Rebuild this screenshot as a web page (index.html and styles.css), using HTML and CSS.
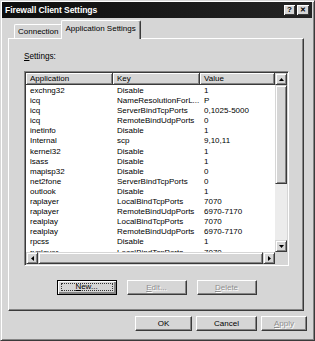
FILE: index.html
```html
<!DOCTYPE html>
<html>
<head>
<meta charset="utf-8">
<link rel="stylesheet" href="styles.css">
</head>
<body>
<div class="window">
  <div class="titlebar">
    <span class="title">Firewall Client Settings</span>
    <span class="tb-btns"><span class="tb-btn">?</span><span class="tb-btn close">&#x2715;</span></span>
  </div>
  <div class="tabs">
    <div class="tab">Connection</div>
    <div class="tab active">Application Settings</div>
  </div>
  <div class="panel">
    <div class="label"><u>S</u>ettings:</div>
    <div class="listbox">
      <div class="lv-main">
        <div class="lv-row lv-head">
          <span class="hcell">Application</span><span class="hcell">Key</span><span class="hcell last">Value</span>
        </div>
        <div class="lv-row"><span>exchng32</span><span>Disable</span><span>1</span></div>
        <div class="lv-row"><span>icq</span><span>NameResolutionForL...</span><span>P</span></div>
        <div class="lv-row"><span>icq</span><span>ServerBindTcpPorts</span><span>0,1025-5000</span></div>
        <div class="lv-row"><span>icq</span><span>RemoteBindUdpPorts</span><span>0</span></div>
        <div class="lv-row"><span>inetinfo</span><span>Disable</span><span>1</span></div>
        <div class="lv-row"><span>Internal</span><span>scp</span><span>9,10,11</span></div>
        <div class="lv-row"><span>kernel32</span><span>Disable</span><span>1</span></div>
        <div class="lv-row"><span>lsass</span><span>Disable</span><span>1</span></div>
        <div class="lv-row"><span>mapisp32</span><span>Disable</span><span>0</span></div>
        <div class="lv-row"><span>net2fone</span><span>ServerBindTcpPorts</span><span>0</span></div>
        <div class="lv-row"><span>outlook</span><span>Disable</span><span>1</span></div>
        <div class="lv-row"><span>raplayer</span><span>LocalBindTcpPorts</span><span>7070</span></div>
        <div class="lv-row"><span>raplayer</span><span>RemoteBindUdpPorts</span><span>6970-7170</span></div>
        <div class="lv-row"><span>realplay</span><span>LocalBindTcpPorts</span><span>7070</span></div>
        <div class="lv-row"><span>realplay</span><span>RemoteBindUdpPorts</span><span>6970-7170</span></div>
        <div class="lv-row"><span>rpcss</span><span>Disable</span><span>1</span></div>
        <div class="lv-row"><span>rvplayer</span><span>LocalBindTcpPorts</span><span>7070</span></div>
      </div>
      <div class="vscroll">
        <div class="sb-btn"><svg width="5" height="3" viewBox="0 0 5 3"><path d="M2.5 0 L5 3 L0 3 Z" fill="#000"/></svg></div>
        <div class="sb-thumb v"></div>
        <div class="sb-track"></div>
        <div class="sb-btn"><svg width="5" height="3" viewBox="0 0 5 3"><path d="M0 0 L5 0 L2.5 3 Z" fill="#000"/></svg></div>
      </div>
      <div class="hscroll">
        <div class="sb-btn"><svg width="3" height="5" viewBox="0 0 3 5"><path d="M3 0 L3 5 L0 2.5 Z" fill="#000"/></svg></div>
        <div class="sb-thumb h"></div>
        <div class="sb-btn"><svg width="3" height="5" viewBox="0 0 3 5"><path d="M0 0 L0 5 L3 2.5 Z" fill="#000"/></svg></div>
      </div>
      <div class="corner"></div>
    </div>
    <div class="btn-row">
      <div class="btn focus"><span class="focus-ring"><u>N</u>ew...</span></div>
      <div class="btn disabled"><u>E</u>dit...</div>
      <div class="btn disabled"><u>D</u>elete</div>
    </div>
  </div>
  <div class="dlg-buttons">
    <div class="btn dlg ok">OK</div>
    <div class="btn dlg cancel">Cancel</div>
    <div class="btn dlg apply disabled"><u>A</u>pply</div>
  </div>
</div>
</body>
</html>
```

FILE: styles.css
```css
* { box-sizing: border-box; }
html, body { margin: 0; padding: 0; background: #d6d6d6; }
body {
  font-family: "Liberation Sans", Arial, sans-serif;
  font-size: 8px;
  color: #000;
}
.window {
  width: 315px;
  height: 341px;
  background: #d6d6d6;
  border: 1px solid;
  border-color: #d6d6d6 #3a3a3a #3a3a3a #d6d6d6;
  box-shadow: inset 1px 1px #fff, inset -1px -1px #858585;
  padding: 1px 2px 2px 1px;
  display: flex;
  flex-direction: column;
}
.titlebar {
  height: 16px;
  background: linear-gradient(90deg, #0e0e0e, #242424);
  color: #fff;
  display: flex;
  align-items: center;
  justify-content: space-between;
  padding: 0 3px 0 3px;
}
.title {
  font-weight: bold;
  font-size: 8.6px;
  letter-spacing: -0.1px;
}
.tb-btns { display: flex; gap: 2px; }
.tb-btn {
  width: 11px;
  height: 10px;
  background: #d6d6d6;
  color: #000;
  font-weight: bold;
  font-size: 8px;
  line-height: 10px;
  text-align: center;
  box-shadow: inset 1px 1px #fff, inset -1px -1px #3a3a3a;
}
.tb-btn.close { width: 12px; font-size: 7px; }
.tabs {
  display: flex;
  align-items: flex-end;
  height: 19px;
  padding-left: 12px;
  margin-top: 1px;
  position: relative;
  z-index: 1;
}
.tab {
  height: 14px;
  padding: 2px 3px 0 3px;
  border-top: 1px solid #fff;
  border-left: 1px solid #fff;
  border-right: 1px solid #3a3a3a;
  border-top-left-radius: 2px;
  border-top-right-radius: 2px;
  line-height: 10px;
  font-size: 8px;
}
.tab.active {
  height: 19px;
  padding-top: 3px;
  margin-bottom: -1px;
  margin-left: -1px;
  background: #d6d6d6;
  box-shadow: inset -1px 0 #858585;
  padding-left: 3px;
  padding-right: 4px;
}
.panel {
  margin: 0 8px 0 6px;
  height: 273px;
  border: 1px solid;
  border-color: #fff #3a3a3a #3a3a3a #fff;
  box-shadow: inset -1px -1px #858585;
  display: flex;
  flex-direction: column;
  padding: 0 14px 0 15px;
}
.label {
  margin-top: 13px;
  height: 10px;
  line-height: 10px;
  font-size: 8.2px;
}
.listbox {
  margin-top: 9px;
  height: 195px;
  border: 1px solid;
  border-color: #858585 #fff #fff #858585;
  box-shadow: inset 1px 1px #3a3a3a, inset -1px -1px #d6d6d6;
  padding: 1px;
  background: #fff;
  display: grid;
  grid-template-columns: 1fr 12px;
  grid-template-rows: 1fr 12px;
}
.lv-main {
  overflow: hidden;
  background: #fff;
}
.lv-row {
  display: grid;
  grid-template-columns: 87px 87px 1fr;
  height: 10.1px;
  line-height: 10.1px;
  font-size: 8px;
  white-space: nowrap;
}
.lv-row span { padding-left: 4px; overflow: hidden; }
.lv-head { height: 12px; line-height: 11px; margin-bottom: 1px; }
.hcell {
  background: #d6d6d6;
  box-shadow: inset 1px 1px #fff, inset -1px -1px #858585;
  border-right: 1px solid #3a3a3a;
  border-bottom: 1px solid #3a3a3a;
}
.vscroll {
  display: flex;
  flex-direction: column;
  background: #ececec;
}
.sb-btn {
  width: 12px;
  height: 12px;
  background: #d6d6d6;
  border: 1px solid;
  border-color: #d6d6d6 #3a3a3a #3a3a3a #d6d6d6;
  box-shadow: inset 1px 1px #fff, inset -1px -1px #858585;
  display: flex;
  align-items: center;
  justify-content: center;
  flex: none;
}
.sb-thumb {
  background: #d6d6d6;
  border: 1px solid;
  border-color: #d6d6d6 #3a3a3a #3a3a3a #d6d6d6;
  box-shadow: inset 1px 1px #fff, inset -1px -1px #858585;
}
.sb-thumb.v { height: 99px; flex: none; }
.sb-track { flex: 1; }
.hscroll {
  display: flex;
  background: #ececec;
}
.sb-thumb.h { flex: 1; }
.corner { background: #d6d6d6; }
.btn-row {
  margin-top: 14px;
  display: flex;
  justify-content: center;
  gap: 10px;
}
.btn {
  width: 60px;
  height: 15px;
  border: 1px solid;
  border-color: #fff #3a3a3a #3a3a3a #fff;
  box-shadow: inset -1px -1px #858585;
  display: flex;
  align-items: center;
  justify-content: center;
  font-size: 8px;
  line-height: 10px;
}
.btn.focus {
  border: 1px solid #000;
  box-shadow: inset 1px 1px #fff, inset -2px -2px #858585;
  padding: 2px 3px 3px 3px;
}
.focus-ring {
  width: 100%;
  height: 100%;
  border: 1px dotted #333;
  display: flex;
  align-items: center;
  justify-content: center;
}
.btn.disabled {
  color: #8e8e8e;
  text-shadow: 1px 1px #fff;
}
.dlg-buttons {
  margin-top: 5px;
  display: flex;
  justify-content: flex-end;
  gap: 4px;
  padding-right: 5px;
}
.btn.ok { width: 57px; }
.btn.cancel { width: 61px; }
.btn.apply { width: 46px; }
```
